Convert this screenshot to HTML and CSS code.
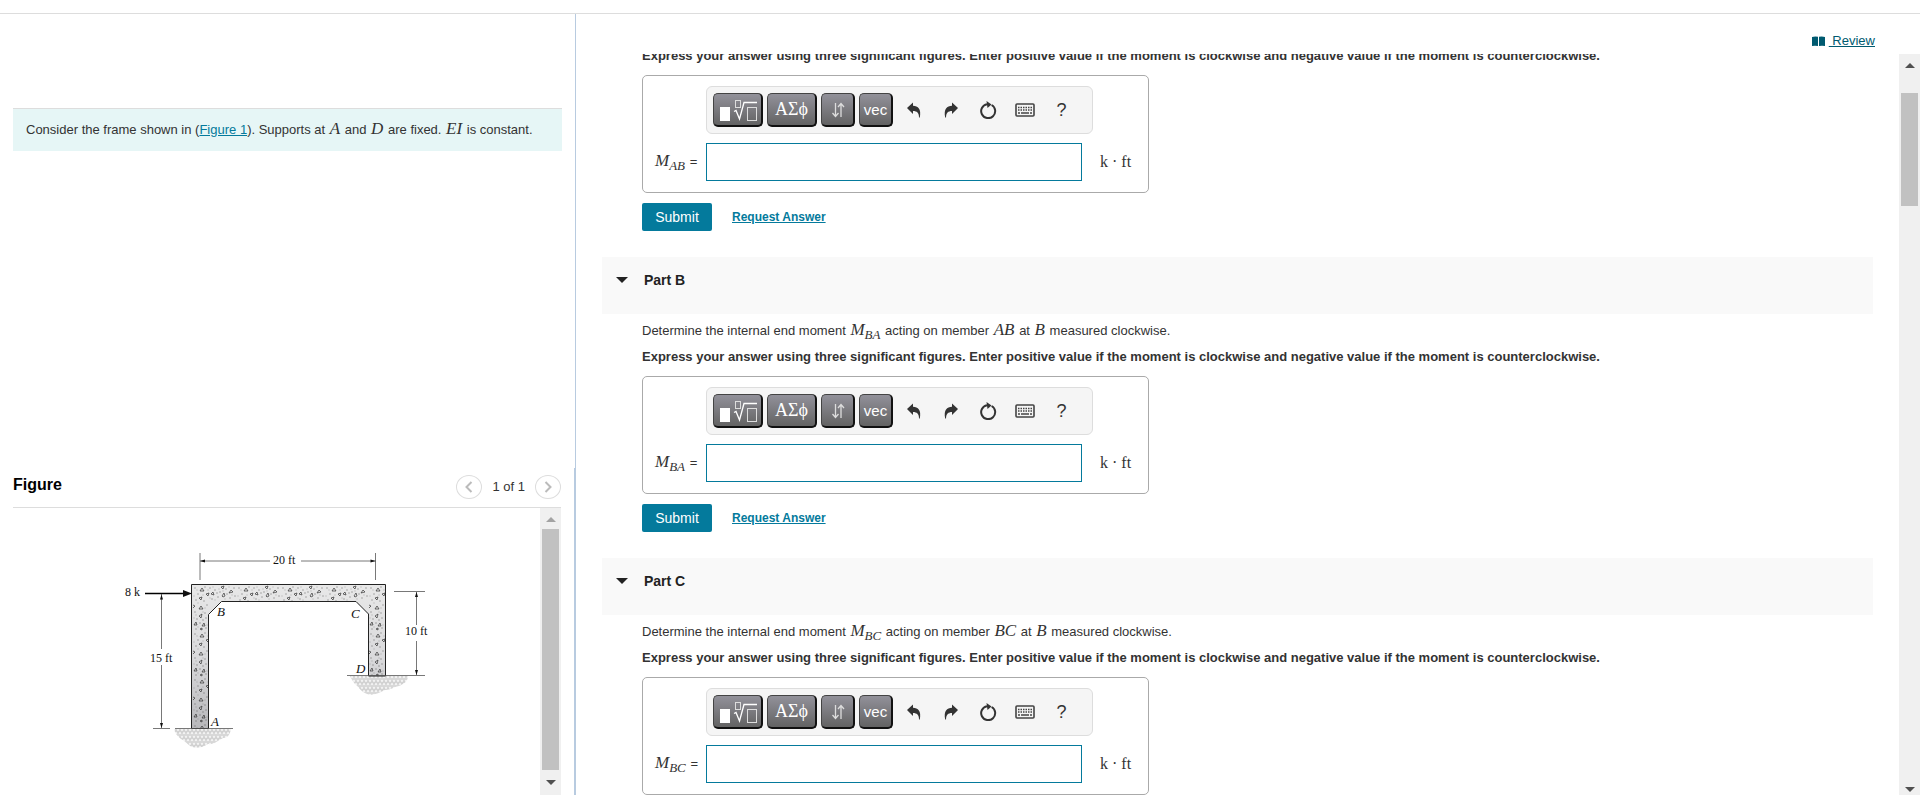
FILE: index.html
```html
<!DOCTYPE html>
<html lang="en">
  <head>
    <meta charset="UTF-8" />
    <meta name="viewport" content="width=device-width, initial-scale=1.0" />
    <title>Frame moments</title>
    <link rel="stylesheet" href="styles.css">
  </head>
  <body>
    <!-- shared icons -->
    <svg class="sprite" aria-hidden="true">
      <symbol id="icon-root" viewBox="0 0 38 24">
        <rect x="1" y="9" width="10" height="14" fill="#fff" />
        <rect x="16.5" y="2.5" width="5" height="7" fill="none" stroke="#ddd" />
        <path d="M15 13.5l2-1 3.5 8.5L25 4.5h13" fill="none" stroke="#fff" stroke-width="1.3" />
        <rect x="28.5" y="9.5" width="9" height="13" fill="none" stroke="#ddd" />
      </symbol>
      <symbol id="icon-arrows" viewBox="0 0 14 16">
        <path d="M4.5 1v13M1.5 11l3 3.5 3-3.5M10 15V2M7 5l3-3.5L13 5" fill="none" stroke="#ddd" stroke-width="1.3" />
      </symbol>
      <symbol id="icon-undo" viewBox="0 0 16 16">
        <path d="M1 6l6-5.500v3.300c5 .2 8.500 3.200 6.800 11.700h-.8c0-4.500-2-6.500-6-6.500v3z" fill="#333" />
      </symbol>
      <symbol id="icon-redo" viewBox="0 0 16 16">
        <path d="M15 6L9 .5v3.300c-5 .2-8.500 3.200-6.800 11.700H3C3 11 5 9 9 9v3z" fill="#333" />
      </symbol>
      <symbol id="icon-reset" viewBox="0 0 18 18">
        <path d="M12.600 4A7 7 0 1 1 8 3.200" fill="none" stroke="#333" stroke-width="2" />
        <path d="M7.5 0l5 3.500L8.5 7z" fill="#333" />
      </symbol>
      <symbol id="icon-keyboard" viewBox="0 0 20 14">
        <rect x="1" y="1" width="18" height="12" rx="1" fill="none" stroke="#444" stroke-width="1.6" />
        <path d="M3 4.500h14M3 7h14" stroke="#444" stroke-width="1.5" stroke-dasharray="1.5 1" />
        <path d="M3 10h2M6 10h8M15 10h2" stroke="#444" stroke-width="1.6" />
      </symbol>
    </svg>

    <header class="topbar"></header>
    <main class="main">
      <section class="left">
        <div class="intro">
          <p class="problem">
            Consider the frame shown in (<a href="#figure">Figure 1</a>). Supports at <i class="math">A</i> and <i class="math">D</i> are fixed. <i class="math">EI</i> is constant.
          </p>
        </div>
        <div class="figure" id="figure">
          <div class="figure-head">
            <h2>Figure</h2>
            <div class="pager">
              <button class="page-btn" aria-label="Previous figure">
                <svg width="10" height="14" viewBox="0 0 10 14"><path d="M7.5 2L2.5 7l5 5" /></svg>
              </button>
              <span>1 of 1</span>
              <button class="page-btn" aria-label="Next figure">
                <svg width="10" height="14" viewBox="0 0 10 14"><path d="M2.5 2l5 5-5 5" /></svg>
              </button>
            </div>
          </div>
          <div class="figure-body">
            <svg class="drawing" width="315" height="210" viewBox="120 545 315 210" role="img" aria-label="Frame ABCD">
              <defs>
                <linearGradient id="shade" x1="0" y1="0" x2="0" y2="1">
                  <stop offset="0" stop-color="#e8e8e8" />
                  <stop offset="0.5" stop-color="#dadadc" />
                  <stop offset="1" stop-color="#b8b8bb" />
                </linearGradient>
                <pattern id="concrete" x="192" y="585" width="44" height="46" patternUnits="userSpaceOnUse">
                  <g fill="none" stroke="#333" stroke-width="0.7">
                    <path d="M8 6l2-3 2 3zM14 9l3-1-1 3zM19 9l2-2 1 3zM7 13l3-1-1 3zM29 2l2 2 1-3zM30 11l2-3 1 3-2 1zM37 8l2-3 2 2z" />
                    <path d="M7 24l2-3 2 3zM7 31l3-2-1 4zM2 40l2-3 1 3zM12 38l-2 3h3zM8 44l2-1v2zM1 20l2 1-2 2" />
                  </g>
                  <g stroke="#333" stroke-width="0.9" stroke-linecap="round">
                    <path d="M3 3h0M6 9h0M13 2h0M18 3h0M23 5h0M26 12h0M34 4h0M38 13h0M42 3h0M25 8h0M35 9h0M20 14h0M4 15h0M12 16h0M15 20h0M3 27h0M13 28h0M5 34h0M14 33h0M8 38h0M14 43h0M4 44h0M11 35h0M28 7h0M43 11h0" />
                  </g>
                  <g stroke="#666" stroke-width="0.6" stroke-linecap="round">
                    <path d="M5 5h0M11 10h0M16 5h0M21 2h0M27 4h0M33 14h0M40 10h0M23 15h0M2 11h0M6 18h0M13 23h0M4 30h0M11 27h0M15 40h0M6 42h0M2 33h0M37 2h0M31 6h0M18 13h0" />
                  </g>
                </pattern>
                <pattern id="gravel" width="8" height="7" patternUnits="userSpaceOnUse">
                  <rect width="8" height="7" fill="#dcdcdc" />
                  <g fill="#f2f2f2" stroke="#c4c4c4" stroke-width="0.6">
                    <circle cx="2" cy="1.8" r="1.7" />
                    <circle cx="6" cy="1.8" r="1.7" />
                    <circle cx="0" cy="5.2" r="1.7" />
                    <circle cx="4" cy="5.2" r="1.7" />
                    <circle cx="8" cy="5.2" r="1.7" />
                  </g>
                </pattern>
              </defs>
              <!-- ground under A and D -->
              <path d="M174 729h57c-1 5-3 9-8 9-5 3-10 7-15 6-5 3-10 5-16 3-5-3-7-6-11-8-4-3-6-6-7-10z" fill="url(#gravel)" />
              <path d="M350 676h58c0 5-4 8-9 10-6 1-8 4-14 4-6 3-12 6-18 4-6-2-8-7-12-10-2-3-4-5-5-8z" fill="url(#gravel)" />
              <!-- frame -->
              <path d="M191.5 584.5h194V676h-17v-62l-12.5-12.5H221.5l-13 13V728.5h-17z" fill="url(#shade)" />
              <path d="M191.5 584.5h194V676h-17v-62l-12.5-12.5H221.5l-13 13V728.5h-17z" fill="url(#concrete)" stroke="#222" />
              <!-- dimension lines -->
              <g stroke="#555" stroke-width="0.8" fill="none">
                <path d="M175 728.5h58M347 675.5h78M153 728.5h17M394 591.5h31" />
                <path d="M200 553v27M375.5 553v27M200 561h70M301 561h75" />
                <path d="M161.5 594v55M161.5 665v63M416.5 592v33M416.5 641v34" />
              </g>
              <path d="M145 593.5h42" stroke="#000" stroke-width="1.6" />
              <g fill="#111">
                <path d="M183 590l9 3.500-9 3.500zM200 561l5-1.500v3zM375.5 561l-5-1.500v3z" />
                <path d="M161.5 594.5l-1.500 5h3zM161.5 728l-1.500-5h3zM416.5 592l-1.500 5h3zM416.5 675l-1.500-5h3z" />
              </g>
              <g class="dims">
                <text x="125" y="596">8 k</text>
                <text x="273" y="564">20 ft</text>
                <text x="150" y="662">15 ft</text>
                <text x="405" y="635">10 ft</text>
              </g>
              <g class="joints">
                <text x="217" y="616">B</text>
                <text x="351" y="618">C</text>
                <text x="356" y="673">D</text>
                <text x="211" y="726">A</text>
              </g>
            </svg>
            <div class="scrollbar muted">
              <span class="arrow up"></span>
              <span class="thumb"></span>
              <span class="arrow down"></span>
            </div>
          </div>
        </div>
      </section>

      <section class="right">
        <div class="tools">
          <a class="review" href="#review"><svg width="13" height="11" viewBox="0 0 13 11"><path d="M0 1Q3 0 6 .8V10Q3 9.300 0 10zM7 .8Q10 0 13 1v9Q10 9.300 7 10z" fill="#005a70" /></svg><span>&nbsp;Review</span></a>
        </div>
        <div class="scroller">
          <div class="parts">
            <article class="part first">
              <div class="part-body">
                <p class="hint">Express your answer using three significant figures. Enter positive value if the moment is clockwise and negative value if the moment is counterclockwise.</p>
                <div class="answer">
                  <div class="toolbar">
                    <button class="key wide" aria-label="Templates"><svg width="38" height="24"><use href="#icon-root" /></svg></button>
                    <button class="key wide greek">ΑΣϕ</button>
                    <button class="key" aria-label="Subscript and superscript"><svg width="14" height="16"><use href="#icon-arrows" /></svg></button>
                    <button class="key">vec</button>
                    <button class="tool" aria-label="Undo"><svg width="16" height="16"><use href="#icon-undo" /></svg></button>
                    <button class="tool" aria-label="Redo"><svg width="16" height="16"><use href="#icon-redo" /></svg></button>
                    <button class="tool" aria-label="Reset"><svg width="18" height="18"><use href="#icon-reset" /></svg></button>
                    <button class="tool" aria-label="Keyboard"><svg width="20" height="14"><use href="#icon-keyboard" /></svg></button>
                    <button class="tool">?</button>
                  </div>
                  <label for="mab"><i class="math">M<sub>AB</sub></i> =</label>
                  <input type="text" id="mab" />
                  <span class="unit">k · ft</span>
                </div>
                <div class="actions">
                  <button class="submit">Submit</button>
                  <a href="#answer-a">Request Answer</a>
                </div>
              </div>
            </article>

            <article class="part">
              <h3 class="part-head">Part B</h3>
              <div class="part-body">
                <p>Determine the internal end moment <i class="math">M<sub>BA</sub></i> acting on member <i class="math">AB</i> at <i class="math">B</i> measured clockwise.</p>
                <p class="hint">Express your answer using three significant figures. Enter positive value if the moment is clockwise and negative value if the moment is counterclockwise.</p>
                <div class="answer">
                  <div class="toolbar">
                    <button class="key wide" aria-label="Templates"><svg width="38" height="24"><use href="#icon-root" /></svg></button>
                    <button class="key wide greek">ΑΣϕ</button>
                    <button class="key" aria-label="Subscript and superscript"><svg width="14" height="16"><use href="#icon-arrows" /></svg></button>
                    <button class="key">vec</button>
                    <button class="tool" aria-label="Undo"><svg width="16" height="16"><use href="#icon-undo" /></svg></button>
                    <button class="tool" aria-label="Redo"><svg width="16" height="16"><use href="#icon-redo" /></svg></button>
                    <button class="tool" aria-label="Reset"><svg width="18" height="18"><use href="#icon-reset" /></svg></button>
                    <button class="tool" aria-label="Keyboard"><svg width="20" height="14"><use href="#icon-keyboard" /></svg></button>
                    <button class="tool">?</button>
                  </div>
                  <label for="mba"><i class="math">M<sub>BA</sub></i> =</label>
                  <input type="text" id="mba" />
                  <span class="unit">k · ft</span>
                </div>
                <div class="actions">
                  <button class="submit">Submit</button>
                  <a href="#answer-b">Request Answer</a>
                </div>
              </div>
            </article>

            <article class="part">
              <h3 class="part-head">Part C</h3>
              <div class="part-body">
                <p>Determine the internal end moment <i class="math">M<sub>BC</sub></i> acting on member <i class="math">BC</i> at <i class="math">B</i> measured clockwise.</p>
                <p class="hint">Express your answer using three significant figures. Enter positive value if the moment is clockwise and negative value if the moment is counterclockwise.</p>
                <div class="answer">
                  <div class="toolbar">
                    <button class="key wide" aria-label="Templates"><svg width="38" height="24"><use href="#icon-root" /></svg></button>
                    <button class="key wide greek">ΑΣϕ</button>
                    <button class="key" aria-label="Subscript and superscript"><svg width="14" height="16"><use href="#icon-arrows" /></svg></button>
                    <button class="key">vec</button>
                    <button class="tool" aria-label="Undo"><svg width="16" height="16"><use href="#icon-undo" /></svg></button>
                    <button class="tool" aria-label="Redo"><svg width="16" height="16"><use href="#icon-redo" /></svg></button>
                    <button class="tool" aria-label="Reset"><svg width="18" height="18"><use href="#icon-reset" /></svg></button>
                    <button class="tool" aria-label="Keyboard"><svg width="20" height="14"><use href="#icon-keyboard" /></svg></button>
                    <button class="tool">?</button>
                  </div>
                  <label for="mbc"><i class="math">M<sub>BC</sub></i> =</label>
                  <input type="text" id="mbc" />
                  <span class="unit">k · ft</span>
                </div>
              </div>
            </article>
          </div>
          <div class="scrollbar">
            <span class="arrow up"></span>
            <span class="thumb short"></span>
            <span class="arrow down"></span>
          </div>
        </div>
      </section>
    </main>
  </body>
</html>
```
FILE: styles.css
```css
* {
  box-sizing: border-box;
  margin: 0;
  padding: 0;
}
body {
  display: flex;
  flex-direction: column;
  height: 100vh;
  overflow: hidden;
  font-family: "Liberation Sans", Arial, sans-serif;
  font-size: 13px;
  line-height: 20px;
  color: #333;
  background-color: #fff;
}
button {
  font-family: inherit;
  cursor: pointer;
}
a {
  color: #047a9c;
}
.sprite {
  display: none;
}
.topbar {
  flex: none;
  height: 14px;
  border-bottom: 1px solid #ddd;
}
.main {
  display: flex;
  flex: 1;
  min-height: 0;
}
.math {
  margin: 0 1px;
  font-family: "Liberation Serif", serif;
  font-size: 17px;
  line-height: 1;
}
.math sub {
  font-size: 13px;
  line-height: 0;
  vertical-align: -4px;
}

/* left column */
.left {
  display: flex;
  flex-direction: column;
  width: 30%;
}
.intro {
  flex: 1;
  padding: 94px 13px 0;
  border-right: 1px solid #b8cbe0;
}
.problem {
  padding: 11px 13px;
  border-top: 1px solid #ddd;
  background-color: #e6f6f6;
}
.figure {
  flex: none;
  padding: 0 13px;
  border-right: 2px solid #b8cbe0;
}
.figure-head {
  display: flex;
  justify-content: space-between;
  padding: 7px 0 8px;
  border-bottom: 1px solid #ddd;
}
.figure-head h2 {
  font-size: 16px;
  color: #000;
}
.pager {
  display: flex;
  align-items: center;
  gap: 10px;
}
.page-btn {
  display: flex;
  align-items: center;
  justify-content: center;
  width: 26px;
  height: 24px;
  border: 1px solid #ddd;
  border-radius: 50%;
  background-color: #fff;
}
.page-btn path {
  fill: none;
  stroke: #bbb;
  stroke-width: 2;
}
.figure-body {
  display: flex;
  justify-content: space-between;
}
.drawing {
  margin: 37px 0 40px 107px;
}
.dims,
.joints {
  font-family: "Liberation Serif", serif;
  font-size: 12px;
  fill: #111;
}
.joints {
  font-size: 13px;
  font-style: italic;
}

/* scrollbars */
.scrollbar {
  display: flex;
  flex: none;
  flex-direction: column;
  align-items: center;
  width: 21px;
  padding: 9px 0 3px;
  background-color: #f0f0f0;
}
.arrow {
  border: 5px solid transparent;
}
.arrow.up {
  border-top: none;
  border-bottom-color: #505050;
}
.arrow.down {
  margin-top: auto;
  border-bottom: none;
  border-top-color: #505050;
}
.thumb {
  width: 17px;
  height: 241px;
  margin-top: 7px;
  background-color: #c1c1c1;
}
.thumb.short {
  height: 113px;
  margin-top: 25px;
}
.muted {
  padding-bottom: 10px;
}
.muted .up {
  border-bottom-color: #a3a3a3;
}

/* right column */
.right {
  display: flex;
  flex: 1;
  flex-direction: column;
  min-width: 0;
}
.tools {
  display: flex;
  flex: none;
  justify-content: flex-end;
  height: 40px;
  padding: 16px 45px 0;
}
.review {
  display: flex;
  align-items: center;
  gap: 4px;
  height: 22px;
  color: #005a70;
  text-decoration: none;
}
.review span {
  text-decoration: underline;
}
.scroller {
  display: flex;
  flex: 1;
  min-height: 0;
}
.parts {
  flex: 1;
  padding: 0 26px;
  overflow: hidden;
}
/* scrolled past its heading */
.part.first {
  margin-top: -11px;
}
.part-head {
  display: flex;
  align-items: center;
  gap: 16px;
  height: 57px;
  padding: 0 14px 11px;
  font-size: 14px;
  color: #222;
  background-color: #f9f9f9;
}
.part-head::before {
  content: "";
  border: 6px solid transparent;
  border-top-color: #222;
  border-bottom: none;
}
.part-body {
  padding: 0 40px 26px;
}
.part-body p {
  padding: 3px 0;
}
.part-head + .part-body {
  padding-top: 4px;
}
.part-body .hint {
  font-weight: bold;
}
.answer {
  display: grid;
  grid-template-columns: 52px 376px auto;
  row-gap: 9px;
  align-items: center;
  width: 507px;
  margin-top: 6px;
  padding: 10px 12px 11px 11px;
  border: 1px solid #aaa;
  border-radius: 5px;
}
.answer label {
  white-space: nowrap;
}
.toolbar {
  display: flex;
  grid-column: 2 / 4;
  gap: 4px;
  align-items: center;
  justify-self: start;
  width: 387px;
  height: 48px;
  padding: 0 6px;
  border: 1px solid #ddd;
  border-radius: 6px;
  background-color: #f5f5f5;
}
.key {
  display: flex;
  align-items: center;
  justify-content: center;
  width: 34px;
  height: 34px;
  border: solid;
  border-width: 1px 2px 2px 1px;
  border-color: #444 #111 #111 #444;
  border-radius: 5px;
  font-size: 15px;
  color: #fff;
  background: linear-gradient(#92919a, #636363);
}
.key.wide {
  width: 50px;
}
.key.greek {
  font-family: "Liberation Serif", serif;
  font-size: 18px;
}
.tool {
  display: flex;
  align-items: center;
  justify-content: center;
  width: 33px;
  height: 34px;
  border: none;
  font-size: 18px;
  color: #333;
  background: none;
}
.answer input {
  height: 38px;
  padding: 0 8px;
  border: 1px solid #047a9c;
  font-size: 16px;
}
.unit {
  padding-left: 18px;
  font-family: "Liberation Serif", serif;
  font-size: 16px;
}
.actions {
  display: flex;
  align-items: center;
  gap: 20px;
  margin-top: 10px;
}
.actions a {
  font-size: 12px;
  font-weight: bold;
}
.submit {
  width: 70px;
  height: 28px;
  border: none;
  border-radius: 2px;
  font-size: 14px;
  color: #fff;
  background-color: #047a9c;
}
```
